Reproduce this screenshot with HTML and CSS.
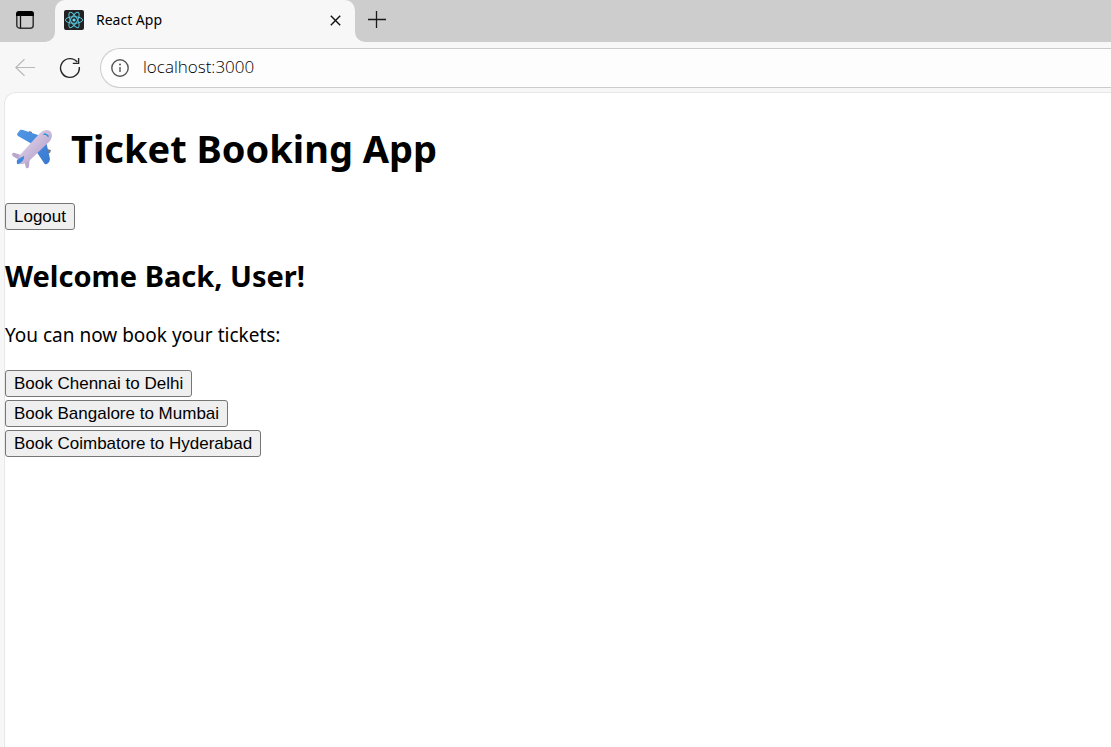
FILE: index.html
```
<!DOCTYPE html>
<html lang="en">
<head>
<meta charset="utf-8">
<title>React App</title>
<link rel="stylesheet" href="styles.css">
</head>
<body>
<div class="browser">
  <header class="tab-strip">
    <div class="strip-start">
      <button class="icon-button" aria-label="Tab actions">
        <svg width="20" height="20" viewBox="0 0 20 20"><rect x="1.8" y="1.8" width="16.4" height="16.4" rx="3" fill="none" stroke="#333" stroke-width="1.5"/><path d="M1 6V4a3 3 0 0 1 3-3h12a3 3 0 0 1 3 3v2z" fill="#000"/><path d="M5.5 5v13" stroke="#111" stroke-width="1.3"/></svg>
      </button>
    </div>
    <div class="tab">
      <svg width="20" height="20" viewBox="0 0 20 20"><rect width="20" height="20" rx="2" fill="#222"/><g fill="none" stroke="#58c4dc" stroke-width="1"><ellipse cx="10" cy="10" rx="8.6" ry="3.3"/><ellipse cx="10" cy="10" rx="8.6" ry="3.3" transform="rotate(60 10 10)"/><ellipse cx="10" cy="10" rx="8.6" ry="3.3" transform="rotate(120 10 10)"/></g><circle cx="10" cy="10" r="1.6" fill="#61dafb"/></svg>
      <span class="tab-title">React App</span>
      <button class="icon-button" aria-label="Close tab">
        <svg width="11" height="11" viewBox="0 0 11 11"><path d="M.8.8l9.4 9.4M10.2.8L.8 10.2" stroke="#111" stroke-width="1.4"/></svg>
      </button>
    </div>
    <div class="strip-end">
      <button class="icon-button" aria-label="New tab">
        <svg width="18" height="18" viewBox="0 0 18 18"><path d="M8.5 0v17M0 8.5h18" stroke="#1a1a1a" stroke-width="1.3"/></svg>
      </button>
    </div>
  </header>
  <nav class="toolbar">
    <button class="icon-button" aria-label="Back">
      <svg width="20" height="18" viewBox="0 0 20 18"><path d="M20 8.5H.8M9.5.2L.8 8.5l8.7 8.3" fill="none" stroke="#b9b9b9" stroke-width="1.2"/></svg>
    </button>
    <button class="icon-button" aria-label="Refresh">
      <svg width="22" height="22" viewBox="0 0 22 22"><path d="M20.3 10A9.4 9.4 0 1 1 18.2 5M19.6 1v5.4h-5.8" fill="none" stroke="#262626" stroke-width="1.4"/></svg>
    </button>
    <div class="address">
      <svg width="18" height="18" viewBox="0 0 18 18"><circle cx="9" cy="9" r="8.2" fill="none" stroke="#555" stroke-width="1.4"/><path d="M9 8v5" stroke="#555" stroke-width="1.4"/><circle cx="9" cy="5.4" r="1" fill="#555"/></svg>
      <input class="address-input" type="text" value="localhost:3000" aria-label="Address">
    </div>
  </nav>
  <main class="page">
    <h1 class="title">
      <svg class="plane" width="40" height="40" viewBox="0 0 40 40">
        <defs>
          <linearGradient id="body" x1="0" y1="0" x2="1" y2="1"><stop offset=".25" stop-color="#dacde6"/><stop offset=".8" stop-color="#b5a2cc"/></linearGradient>
          <linearGradient id="wing" x1="0" y1="0" x2="1" y2="1"><stop offset="0" stop-color="#5298e5"/><stop offset="1" stop-color="#3878d2"/></linearGradient>
        </defs>
        <path d="M16 5l1-3 3 1v5zM35 20l4 1-1 3-4 1z" fill="#777985"/>
        <path d="M5 5L8 1Q9 .5 11 1L29 7 20 15 6 7Q5 6 5 5zM34 12l4 18q0 3-3 5-2 1-3-1L24 22z" fill="url(#wing)"/>
        <path d="M0 25q1-2 3-1l9 3-3 5-7-4q-2-1-2-3zM12 31l6-3-1 9q0 3-3 2z" fill="#bba7ce"/>
        <path d="M8 26L28 4Q33-1 38 2q4 4 0 10L17 32q-4 4-9 3-3-3 0-9z" fill="url(#body)"/>
        <path d="M5 31q4-3 7-4 1 4-5 8-3 1-2-4z" fill="#4088dd"/>
        <path d="M32 4.5q2-1 5 2.5l-1 1.2q-2-3-5-2.2z" fill="#2495d3"/>
      </svg>
      <span>Ticket Booking App</span>
    </h1>
    <button class="button">Logout</button>
    <h2 class="welcome">Welcome Back, User!</h2>
    <p class="prompt">You can now book your tickets:</p>
    <div class="bookings">
      <button class="button">Book Chennai to Delhi</button>
      <button class="button">Book Bangalore to Mumbai</button>
      <button class="button">Book Coimbatore to Hyderabad</button>
    </div>
  </main>
</div>
</body>
</html>
```
FILE: styles.css
```
* { box-sizing: border-box; }
body {
  margin: 0;
  font-family: "Noto Sans", "Open Sans", sans-serif;
  color: #000;
}
.browser {
  display: flex;
  flex-direction: column;
  min-height: 100vh;
  background: #f7f7f7;
  overflow: hidden;
}
.icon-button {
  display: flex;
  padding: 0;
  border: 0;
  background: none;
}
.tab-strip {
  display: flex;
  height: 42px;
  background: linear-gradient(#cdcdcd 50%, #f7f7f7 50%);
}
.strip-start, .strip-end {
  display: flex;
  align-items: center;
  padding-bottom: 2px;
  background: #cdcdcd;
}
.strip-start {
  width: 55px;
  padding-left: 15px;
  border-bottom-right-radius: 10px;
}
.strip-end {
  flex: 1;
  padding-left: 13px;
  border-bottom-left-radius: 10px;
}
.tab {
  display: flex;
  align-items: center;
  width: 300px;
  padding: 0 14px 2px 9px;
  border-radius: 10px 10px 0 0;
  background: #f7f7f7;
}
.tab-title {
  flex: 1;
  padding: 0 0 2px 12px;
  font-size: 14px;
}
.toolbar {
  display: flex;
  align-items: flex-start;
  height: 50px;
  padding: 6px 0 0 15px;
}
.toolbar .icon-button {
  align-items: center;
  height: 40px;
  margin-right: 24px;
}
.toolbar .icon-button + .icon-button { margin-right: 19px; }
.address {
  display: flex;
  flex: 1;
  align-items: center;
  gap: 14px;
  height: 40px;
  padding-left: 10px;
  border: 1px solid #ccc;
  border-width: 1px 0 1px 1px;
  border-radius: 20px 0 0 20px;
  background: #fdfdfd;
}
.address-input {
  flex: 1;
  padding: 0 0 2px;
  border: 0;
  background: none;
  font: 300 17px/24px "Open Sans", "Noto Sans", sans-serif;
  color: #000;
  outline: 0;
}
.page {
  flex: 1;
  margin-left: 4px;
  border: 1px solid #e8e8e8;
  border-width: 1px 0 0 1px;
  border-top-left-radius: 12px;
  background: #fff;
}
.title {
  display: flex;
  align-items: center;
  gap: 19px;
  margin: 29px 0 28px;
  padding-left: 7px;
  font-size: 38px;
  line-height: 53px;
}
.button {
  display: block;
  height: 27px;
  padding: 0 8px;
  border: 1px solid #767676;
  border-radius: 3px;
  background: #efefef;
  color: #000;
  font: 17px/24px "Liberation Sans", Arial, sans-serif;
}
.welcome {
  margin: 26px 0;
  font-size: 29px;
  line-height: 40px;
}
.prompt {
  margin: 0 0 21px;
  font-size: 19px;
  line-height: 27px;
}
.bookings {
  display: flex;
  flex-direction: column;
  align-items: flex-start;
  gap: 3px;
}
```
